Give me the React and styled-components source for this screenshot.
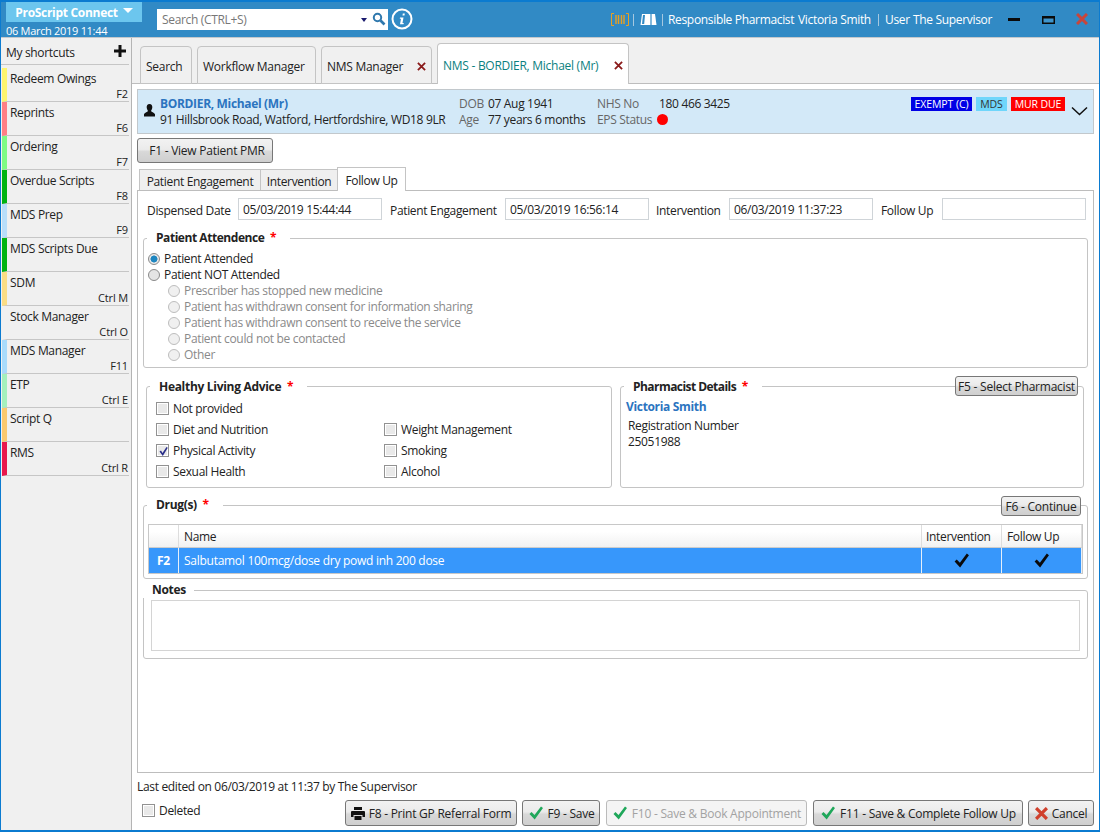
import React from "react";
import styled, { createGlobalStyle, css } from "styled-components";

const Global = createGlobalStyle`
  html, body { margin: 0; padding: 0; background: #fff; }
  body { font-family: "Open Sans", "Noto Sans", "Liberation Sans", sans-serif; font-size: 12px; color: #222; letter-spacing: -0.33px; }
  * { box-sizing: border-box; }
`;
const at = css`position: absolute; left: ${p => p.$x}px; top: ${p => p.$y}px;`;

const Win = styled.div`position: relative; width: 1100px; height: 832px; overflow: hidden; background: #f0f0f0; border: 1px solid #0b7bd0; border-top: 2px solid #0b7bd0; border-bottom: 2px solid #0b7bd0;`;
const Stage = styled.div`position: absolute; left: -1px; top: -2px; width: 1100px; height: 832px;`;
const TitleBar = styled.header`position: absolute; left: 1px; top: 2px; width: 1098px; height: 36px; background: #318ac5; border-bottom: 1px solid #c4c8cc;`;
const Brand = styled.button`${at} width: 136px; height: 21px; border: 0; padding: 2px 0 0 0; background: #6cc6ee; color: #fff; font: 700 12px "Open Sans", sans-serif; letter-spacing: -0.3px; display: flex; align-items: center; justify-content: center; gap: 5px;`;
const Caret = styled.span`width: 0; height: 0; border-left: 5px solid transparent; border-right: 5px solid transparent; border-top: 5px solid #fff; margin-top: -5px;`;
const HeadDate = styled.div`${at} color: #fff; font-size: 11px; letter-spacing: -0.3px; line-height: 14px;`;
const SearchBox = styled.div`${at} width: 231px; height: 21px; background: #fff; display: flex; align-items: center; padding-left: 5px; color: #777;`;
const SearchArrow = styled.span`position: absolute; left: 204px; top: 9px; width: 0; height: 0; border-left: 3.5px solid transparent; border-right: 3.5px solid transparent; border-top: 4px solid #1a1a6e;`;
const Glyph = styled.svg`${at} display: block;`;
const SearchGlyph = styled.svg`position: absolute; left: 215px; top: 3px;`;
const HeadText = styled.span`${at} color: #fff; line-height: 16px; white-space: nowrap;`;
const HeadSep = styled.span`${at} width: 1px; height: 12px; background: #a5c8e0;`;

const Side = styled.aside`position: absolute; left: 1px; top: 38px; width: 131px; height: 792px; background: #f0f0f0; border-right: 1px solid #b4b4b4;`;
const SideHead = styled.div`height: 27px; padding: 7px 0 0 5px; line-height: 16px; position: relative; border-bottom: 1px solid #c6c6c6; margin-right: 2px;`;
const Plus = styled.svg`position: absolute; left: 113px; top: 7px;`;
const Items = styled.div`padding: 3px 2px 0 1px;`;
const Item = styled.div`position: relative; height: 34px; border-bottom: 1px solid #c6c6c6; border-left: 5px solid ${p => p.$c}; padding: 3px 0 0 3px; line-height: 16px;`;
const Key = styled.span`position: absolute; right: 1px; bottom: 0; font-size: 11px; letter-spacing: -0.15px; line-height: 14px;`;

const Strip = styled.div`position: absolute; left: 132px; top: 38px; width: 967px; height: 46px; background: #f0f0f0; border-bottom: 1px solid #bdbdbd;`;
const Tab = styled.div`${at} width: ${p => p.$w}px; height: ${p => p.$h || 38}px; background: ${p => p.$active ? "#fff" : "#f0f0f0"}; border: 1px solid #c4c4c4; border-bottom: ${p => p.$active ? "0" : "1px solid #c4c4c4"}; border-radius: 4px 4px 0 0; padding: ${p => p.$active ? "14px" : "11.5px"} 0 0 5px; line-height: 16px; letter-spacing: -0.27px; color: ${p => p.$active ? "#0b7f7f" : "#222"}; white-space: nowrap;`;
const Close = styled.svg`position: absolute; right: ${p => p.$r}px; top: ${p => p.$t}px;`;

const Main = styled.main`position: absolute; left: 132px; top: 84px; width: 967px; height: 746px; background: #fff;`;
const Banner = styled.section`${at} width: 957px; height: 45px; background: #d3e9f8; border: 1px solid #c2c8cc; line-height: 16px;`;
const BannerText = styled.span`${at} white-space: nowrap; color: ${p => p.$c || "#222"}; font-weight: ${p => p.$b ? 700 : 400};`;
const Dot = styled.span`${at} width: 11px; height: 11px; border-radius: 50%; background: #f00;`;
const Badge = styled.span`${at} width: ${p => p.$w}px; height: 14px; background: ${p => p.$bg}; color: ${p => p.$fg}; font-size: 10.5px; letter-spacing: -0.1px; line-height: 14px; text-align: center; white-space: nowrap;`;
const Btn = styled.button`${at} width: ${p => p.$w}px; height: ${p => p.$h || 26}px; border: 1px solid ${p => p.$off ? "#bbb" : "#777"}; border-radius: 3px; background: ${p => p.$off ? "#f4f4f4" : "linear-gradient(#f2f2f2 0%, #ebebeb 45%, #d8d8d8 55%, #cfcfcf 100%)"}; color: ${p => p.$off ? "#a2a2a2" : "#222"}; font: 12px "Open Sans", sans-serif; letter-spacing: -0.24px; padding: 0 0 0 ${p => p.$pl || 0}px; display: flex; align-items: center; justify-content: center; gap: 4px; white-space: nowrap;`;
const SubTab = styled.div`${at} width: ${p => p.$w}px; height: ${p => p.$active ? 24 : 22}px; background: ${p => p.$active ? "#fff" : "#efefef"}; border: 1px solid #c4c4c4; border-bottom: ${p => p.$active ? "0" : "1px solid #c4c4c4"}; text-align: center; line-height: ${p => p.$active ? "26px" : "24px"}; z-index: ${p => p.$active ? 2 : 0}; white-space: nowrap;`;
const Panel = styled.div`${at} width: 957px; height: 583px; border: 1px solid #bdbdbd; background: #fff;`;
const Label = styled.span`${at} line-height: 16px; white-space: nowrap; color: ${p => p.$c || "#222"};`;
const Field = styled.div`${at} width: 144px; height: 22px; border: 1px solid #cfd4d8; padding: 3px 0 0 4px; line-height: 16px;`;
const Group = styled.fieldset`${at} width: ${p => p.$w}px; height: ${p => p.$h}px; margin: 0; padding: 0; border: 1px solid #c4c4c4; border-radius: 3px;`;
const Legend = styled.div`${at} background: #fff; padding: 0 ${p => p.$p || 14}px 0 9px; font-weight: 700; line-height: 16px; white-space: nowrap; letter-spacing: ${p => p.$ls || -0.33}px;`;
const Star = styled.span`color: #f00; margin-left: 3px;`;
const Radio = styled.span`${at} width: 12px; height: 12px; border-radius: 50%; border: 1px solid ${p => p.$off ? "#bdbdbd" : "#8a8a8a"}; background: ${p => p.$on ? "radial-gradient(circle, #1e86c0 0 3.2px, #e8e8e8 3.8px)" : p.$off ? "#f0f0f0" : "#e4e4e4"};`;
const Check = styled.span`${at} width: 13px; height: 13px; border: 1px solid #929292; background: #e9e9e9; box-shadow: inset 0 0 0 1px #fff; display: block;`;
const Link = styled.span`${at} color: #2b74bf; font-weight: 700; line-height: 16px; white-space: nowrap;`;
const Table = styled.div`${at} width: 935px; height: 50px; border: 1px solid #c8c8c8; display: grid; grid-template-columns: 30px 743px 80px 80px; grid-template-rows: 23px 25px;`;
const Th = styled.div`background: linear-gradient(#fff 0 30%, #f1f1f1 100%); border-right: 1px solid #ddd; border-bottom: 1px solid #ccc; padding: 4px 0 0 ${p => p.$pad}px; line-height: 16px; white-space: nowrap;`;
const Td = styled.div`background: #3797fb; border-right: 1px solid #e6f0fa; color: #fff; padding-left: ${p => p.$pad || 0}px; display: flex; align-items: center; justify-content: ${p => p.$center ? "center" : "flex-start"}; font-weight: ${p => p.$b ? 700 : 400}; letter-spacing: -0.27px; white-space: nowrap;`;
const NotesBox = styled.div`${at} width: 929px; height: 51px; border: 1px solid #d4d4d4;`;

const Tick = ({ c = "#1fa75a", s = 16 }) => (
  <svg width={s} height={s} viewBox="0 0 16 16"><path d="M1.500 9l2-2 3 3L13 1.500 15 3 6.700 14.500z" fill={c} /></svg>
);
const XIcon = ({ s = 9, r, t, c = "#8a1a1a", w = 2 }) => (
  <Close $r={r} $t={t} width={s} height={s} viewBox="0 0 10 10"><path d="M1 1l8 8M9 1L1 9" stroke={c} strokeWidth={w} /></Close>
);

const items = [
  ["Redeem Owings", "F2", "#fdf56e"], ["Reprints", "F6", "#ff7f85"], ["Ordering", "F7", "#7ffb84"],
  ["Overdue Scripts", "F8", "#00b311"], ["MDS Prep", "F9", "#b8defa"], ["MDS Scripts Due", "", "#00b311"],
  ["SDM", "Ctrl M", "#fbdd85"], ["Stock Manager", "Ctrl O", "#f0f0f0"], ["MDS Manager", "F11", "#a9dbfb"],
  ["ETP", "Ctrl E", "#a5f0bd"], ["Script Q", "", "#fbc96e"], ["RMS", "Ctrl R", "#e8174c"],
];

export default function App() {
  return (
    <>
      <Global />
      <Win><Stage>
        <TitleBar>
          <Brand $x={5} $y={-1}>ProScript Connect <Caret /></Brand>
          <HeadDate $x={5} $y={22}>06 March 2019 11:44</HeadDate>
          <SearchBox $x={156} $y={7}>Search (CTRL+S)<SearchArrow />
            <SearchGlyph width="14" height="14" viewBox="0 0 14 14"><circle cx="5.5" cy="5.5" r="3.7" fill="none" stroke="#2f78ad" strokeWidth="2" /><path d="M8.5 8.5l4 4" stroke="#2f78ad" strokeWidth="2.6" /></SearchGlyph>
          </SearchBox>
          <Glyph $x={390} $y={6} width="22" height="22" viewBox="0 0 22 22"><circle cx="11" cy="11" r="9.5" fill="none" stroke="#fff" strokeWidth="2" /><path d="M11.8 5.5h2l-.3 2h-2zM9 9.5h3.5L11.5 15h1.3l-.3 1.2H9l1-5.5H8.8z" fill="#fff" /></Glyph>
          <Glyph $x={610} $y={11} width="18" height="13" viewBox="0 0 18 13"><g fill="none" stroke="#e8a020" strokeWidth="1"><path d="M3 .5H.5v12H3M15 .5h2.5v12H15" /><path d="M5 2v9M7.5 2v9M10.5 2v9M13 2v9" strokeWidth="1.4" /></g></Glyph>
          <HeadSep $x={632} $y={12} />
          <Glyph $x={639} $y={11} width="17" height="13" viewBox="0 0 17 13"><path d="M2 1h13l1.500 11H.5z" fill="#fff" /><path d="M11 1v11" stroke="#318ac5" strokeWidth="1.2" /><path d="M3 2h2l-.8 9H2z" fill="#318ac5" /></Glyph>
          <HeadSep $x={661} $y={12} />
          <HeadText $x={667} $y={10}>Responsible Pharmacist</HeadText>
          <HeadText $x={797} $y={10}>Victoria Smith</HeadText>
          <HeadSep $x={877} $y={12} />
          <HeadText $x={884} $y={10}>User</HeadText>
          <HeadText $x={912} $y={10}>The Supervisor</HeadText>
          <Glyph $x={1007} $y={16} width="12" height="3" viewBox="0 0 12 3"><rect width="12" height="3" fill="#0a0a0a" /></Glyph>
          <Glyph $x={1041} $y={14} width="13" height="8" viewBox="0 0 13 8"><rect x=".75" y=".75" width="11.500" height="6.500" fill="#3f95cc" stroke="#0a0a0a" strokeWidth="1.500" /><rect x="0" y="0" width="13" height="2.500" fill="#0a0a0a" /></Glyph>
          <Glyph $x={1075} $y={11} width="12" height="12" viewBox="0 0 12 12"><path d="M1 1l10 10M11 1L1 11" stroke="#c9453a" strokeWidth="3" /></Glyph>
        </TitleBar>

        <Side>
          <SideHead>My shortcuts
            <Plus width="12" height="12" viewBox="0 0 12 12"><path d="M4.500 0h3v4.500H12v3H7.500V12h-3V7.500H0v-3h4.500z" fill="#111" /></Plus>
          </SideHead>
          <Items>
            {items.map(([n, k, c]) => <Item key={n} $c={c}>{n}<Key>{k}</Key></Item>)}
          </Items>
        </Side>

        <Strip>
          <Tab $x={8} $y={8} $w={52}>Search</Tab>
          <Tab $x={65} $y={8} $w={119}>Workflow Manager</Tab>
          <Tab $x={189} $y={8} $w={111}>NMS Manager<XIcon r={5} t={15} /></Tab>
          <Tab $x={305} $y={5} $w={192} $h={41} $active>NMS - BORDIER, Michael (Mr)<XIcon r={5} t={17} /></Tab>
        </Strip>

        <Main>
          <Banner $x={5} $y={5}>
            <Glyph $x={6} $y={14} width="11" height="13" viewBox="0 0 11 13"><path d="M5.500 0C7.500 0 8.500 1.600 8.300 3.600 8.100 5.300 7.200 6.500 7 7c0 .8 3.500 1.600 4 3.200V12.500H0v-2.300C.5 8.600 4 7.800 4 7 3.800 6.500 2.900 5.300 2.700 3.600 2.500 1.600 3.500 0 5.500 0z" fill="#111" /></Glyph>
            <BannerText $x={22} $y={6} $c="#2b74bf" $b>BORDIER, Michael (Mr)</BannerText>
            <BannerText $x={22} $y={22}>91 Hillsbrook Road, Watford, Hertfordshire, WD18 9LR</BannerText>
            <BannerText $x={321} $y={6} $c="#666">DOB</BannerText>
            <BannerText $x={350} $y={6}>07 Aug 1941</BannerText>
            <BannerText $x={321} $y={22} $c="#666">Age</BannerText>
            <BannerText $x={350} $y={22}>77 years 6 months</BannerText>
            <BannerText $x={459} $y={6} $c="#666">NHS No</BannerText>
            <BannerText $x={521} $y={6}>180 466 3425</BannerText>
            <BannerText $x={459} $y={22} $c="#666">EPS Status</BannerText>
            <Dot $x={519} $y={24} />
            <Badge $x={773} $y={7} $w={61} $bg="#0000e6" $fg="#fff">EXEMPT (C)</Badge>
            <Badge $x={838} $y={7} $w={31} $bg="#6fd6fb" $fg="#333">MDS</Badge>
            <Badge $x={873} $y={7} $w={54} $bg="#f00" $fg="#fff">MUR DUE</Badge>
            <Glyph $x={933} $y={16} width="17" height="10" viewBox="0 0 17 10"><path d="M1 1.500l7.500 7 7.500-7" fill="none" stroke="#111" strokeWidth="1.500" /></Glyph>
          </Banner>
          <Btn $x={5} $y={54} $w={136} $h={25} $pl={4}>F1 - View Patient PMR</Btn>

          <SubTab $x={7} $y={85} $w={122}>Patient Engagement</SubTab>
          <SubTab $x={128} $y={85} $w={78}>Intervention</SubTab>
          <SubTab $x={205} $y={83} $w={69} $active>Follow Up</SubTab>
          <Panel $x={5} $y={106}>
            <Label $x={9} $y={12}>Dispensed Date</Label>
            <Field $x={100} $y={7}>05/03/2019 15:44:44</Field>
            <Label $x={252} $y={12}>Patient Engagement</Label>
            <Field $x={367} $y={7}>05/03/2019 16:56:14</Field>
            <Label $x={518} $y={12}>Intervention</Label>
            <Field $x={591} $y={7}>06/03/2019 11:37:23</Field>
            <Label $x={743} $y={12}>Follow Up</Label>
            <Field $x={804} $y={7} />

            <Group $x={5} $y={47} $w={945} $h={130}>
              <Legend $x={3} $y={-9} $ls={-0.45}>Patient Attendence <Star>*</Star></Legend>
              <Radio $x={4} $y={14} $on /><Label $x={20} $y={12}>Patient Attended</Label>
              <Radio $x={4} $y={30} /><Label $x={20} $y={28}>Patient NOT Attended</Label>
              {["Prescriber has stopped new medicine", "Patient has withdrawn consent for information sharing", "Patient has withdrawn consent to receive the service", "Patient could not be contacted", "Other"].map((t, i) => (
                <React.Fragment key={t}><Radio $x={24} $y={46 + i * 16} $off /><Label $x={40} $y={44 + i * 16} $c="#8a8a8a">{t}</Label></React.Fragment>
              ))}
            </Group>

            <Group $x={8} $y={195} $w={466} $h={102}>
              <Legend $x={3} $y={-8} $ls={-0.3}>Healthy Living Advice <Star>*</Star></Legend>
              <Check $x={9} $y={15} /><Label $x={26} $y={14}>Not provided</Label>
              <Check $x={9} $y={36} /><Label $x={26} $y={35}>Diet and Nutrition</Label>
              <Check $x={9} $y={57} />
              <Glyph $x={11} $y={59} width="11" height="11" viewBox="0 0 11 11"><path d="M1.500 5.500l1.500-1 1.500 2.500L8.500 1l1.300.8-5 8.200z" fill="#2a2f8a" /></Glyph>
              <Label $x={26} $y={56}>Physical Activity</Label>
              <Check $x={9} $y={78} /><Label $x={26} $y={77}>Sexual Health</Label>
              <Check $x={237} $y={36} /><Label $x={254} $y={35}>Weight Management</Label>
              <Check $x={237} $y={57} /><Label $x={254} $y={56}>Smoking</Label>
              <Check $x={237} $y={78} /><Label $x={254} $y={77}>Alcohol</Label>
            </Group>

            <Group $x={482} $y={195} $w={464} $h={102}>
              <Legend $x={3} $y={-8} $ls={-0.55}>Pharmacist Details <Star>*</Star></Legend>
              <Btn $x={334} $y={-11} $w={123} $h={20}>F5 - Select Pharmacist</Btn>
              <Link $x={5} $y={12}>Victoria Smith</Link>
              <Label $x={7} $y={31}>Registration Number</Label>
              <Label $x={7} $y={47}>25051988</Label>
            </Group>

            <Group $x={5} $y={314} $w={945} $h={74}>
              <Legend $x={3} $y={-9}>Drug(s) <Star>*</Star></Legend>
              <Btn $x={857} $y={-10} $w={80} $h={20}>F6 - Continue</Btn>
              <Table $x={4} $y={18}>
                <Th $pad={0} /><Th $pad={5}>Name</Th><Th $pad={4}>Intervention</Th><Th $pad={5}>Follow Up</Th>
                <Td $b $center>F2</Td><Td $pad={5}>Salbutamol 100mcg/dose dry powd inh 200 dose</Td>
                <Td $center><Tick c="#0a0a0a" s={17} /></Td><Td $center><Tick c="#0a0a0a" s={17} /></Td>
              </Table>
            </Group>

            <Group $x={5} $y={399} $w={945} $h={69}>
              <Legend $x={-1} $y={-9} $p={8}>Notes</Legend>
              <NotesBox $x={7} $y={9} />
            </Group>
          </Panel>

          <Label $x={5} $y={695}>Last edited on 06/03/2019 at 11:37 by The Supervisor</Label>
          <Check $x={10} $y={720} />
          <Label $x={27} $y={719}>Deleted</Label>
          <Btn $x={213} $y={716} $w={172}>
            <svg width="14" height="13" viewBox="0 0 14 13"><path d="M3 0h8v3H3zM1 4h12a1 1 0 0 1 1 1v5h-2.500V8h-9v2H0V5a1 1 0 0 1 1-1zM3.500 9h7v4h-7z" fill="#111" /></svg>
            F8 - Print GP Referral Form</Btn>
          <Btn $x={390} $y={716} $w={78}><Tick />F9 - Save</Btn>
          <Btn $x={474} $y={716} $w={201} $off><Tick />F10 - Save &amp; Book Appointment</Btn>
          <Btn $x={681} $y={716} $w={210}><Tick />F11 - Save &amp; Complete Follow Up</Btn>
          <Btn $x={896} $y={716} $w={66}>
            <svg width="13" height="13" viewBox="0 0 12 12"><path d="M1 1l10 10M11 1L1 11" stroke="#d0402c" strokeWidth="3" /></svg>Cancel</Btn>
        </Main>
      </Stage></Win>
    </>
  );
}
